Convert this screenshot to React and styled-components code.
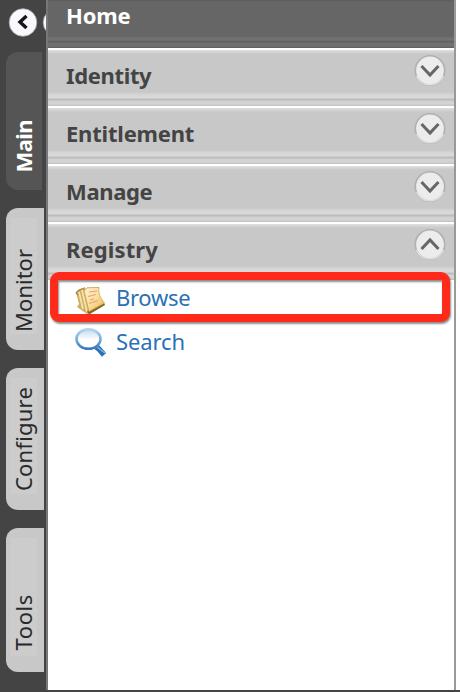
import React from "react";
import styled, { createGlobalStyle, css } from "styled-components";

const Global = createGlobalStyle`
  * { box-sizing: border-box; }
  body { margin: 0; background: #fff; }
`;

const Page = styled.div`
  width: 460px;
  height: 692px;
  display: flex;
  overflow: hidden;
  border-bottom: 2px solid #444;
  background: #fff;
  font-family: "Noto Sans", "Open Sans", sans-serif;
`;

const Rail = styled.aside`
  width: 46px;
  flex: none;
  height: 692px;
  display: flex;
  flex-direction: column;
  background: #444;
`;

const RailControls = styled.div`
  height: 52px;
  flex: none;
  padding: 8px 0 0 8px;
  display: flex;
  gap: 4px;
  overflow: hidden;
`;

const RoundIcon = styled.svg`
  width: 30px;
  height: 30px;
  flex: none;
`;

const Tabs = styled.nav`
  display: flex;
  flex-direction: column;
  gap: 18px;
  padding-left: 6px;
`;

const Tab = styled.div`
  width: ${(p) => (p.$active ? 36 : 38)}px;
  height: ${(p) => p.$height}px;
  flex: none;
  border-radius: 12px 0 0 12px;
  background: ${(p) => (p.$active ? "#555" : "#c8c8c8")};
  padding: 10px 7px 16px 4px;
`;

const TabFace = styled.div`
  width: 27px;
  height: 100%;
  display: flex;
  align-items: flex-end;
  justify-content: center;
  background: ${(p) => (p.$active ? "transparent" : "#ccc")};
`;

const TabLabel = styled.span`
  writing-mode: vertical-rl;
  transform: rotate(180deg);
  line-height: 27px;
  white-space: nowrap;
  font-size: 22px;
  font-weight: ${(p) => (p.$active ? 700 : 400)};
  color: ${(p) => (p.$active ? "#fff" : "#2a2a2a")};
  letter-spacing: ${(p) => p.$spacing || 0}px;
  padding-top: ${(p) => p.$offset}px;
`;

const Panel = styled.main`
  width: 410px;
  flex: none;
  height: 690px;
  border-left: 2px solid #777;
  border-right: 2px solid #999;
  background: #fff;
`;

const barText = css`
  font-size: 22px;
  line-height: 30px;
  font-weight: 700;
`;

const HomeBar = styled.div`
  ${barText}
  height: 48px;
  padding: 0 0 0 18px;
  color: #fff;
  background: linear-gradient(
    #5c5c5c 0, #666 2px, #666 36px, #717171 38px, #737373 40px,
    #666 41px, #5f5f5f 42px, #707070 43px, #737373 46px, #5c5c5c 48px
  );
`;

const SectionBar = styled.div`
  ${barText}
  height: 58px;
  display: flex;
  align-items: flex-start;
  justify-content: space-between;
  padding: 12px 8px 0 18px;
  color: #444;
  background: linear-gradient(
    #fff 0, #fff 2px, #e0e0e0 2px, #d4d4d4 4px, #c8c8c8 6px, #c8c8c8 44px,
    #d7d7d7 47px, #d9d9d9 50px, #bcbcbc 51px, #bcbcbc 52px, #d2d2d2 53px,
    #d4d4d4 56px, #c0c0c0 58px
  );
`;

const Label = styled.span`
  letter-spacing: ${(p) => p.$spacing || 0}px;
`;

const Toggle = styled.svg`
  width: 32px;
  height: 32px;
  margin-top: -5px;
`;

const Entry = styled.a`
  height: 44px;
  display: flex;
  align-items: center;
  gap: 10px;
  padding-left: 27px;
  position: relative;
  font-size: 22px;
  line-height: 30px;
  color: #2a70b6;
`;

const EntryIcon = styled.svg`
  width: 31px;
  height: 31px;
  flex: none;
  margin-top: ${(p) => p.$drop || 3}px;
`;

const Entries = styled.div`
  position: relative;
  margin-top: -5px;
`;

const Highlight = styled.div`
  position: absolute;
  left: 2px;
  top: -3px;
  width: 400px;
  height: 50px;
  border: 8px solid #ff2a1a;
  border-radius: 9px;
  background: #fff;
  box-shadow: 1px 2px 2px rgba(0, 0, 0, 0.45), inset 1px 2px 2px rgba(0, 0, 0, 0.45);
`;

function Chevron({ up }) {
  return (
    <Toggle viewBox="0 0 32 32">
      <circle cx="16" cy="15.5" r="14.7" fill="#ececec" stroke="#b0b0b0" strokeWidth="1.6" />
      <path d="M2.5 21a14.8 14.8 0 0 0 27 0" fill="none" stroke="#ddd" strokeWidth="1.7" />
      <path
        d={up ? "M7.5 20 16 11 24.5 20" : "M7.500 11 16 20 24.500 11"}
        fill="none" stroke="#666" strokeWidth="3"
      />
    </Toggle>
  );
}

function BackButton({ arrow }) {
  return (
    <RoundIcon viewBox="0 0 30 30">
      <circle cx="15" cy="14.5" r="13.8" fill="#f9f8fc" stroke="#aaa" strokeWidth="0.8" />
      {arrow && <path d="M18.5 8 12 14l6.5 6" fill="none" stroke="#161616" strokeWidth="3.4" />}
    </RoundIcon>
  );
}

function BookIcon() {
  return (
    <EntryIcon viewBox="0 0 31 31" $drop={6}>
      <defs>
        <linearGradient id="page" x1="0" y1="0" x2="1" y2="1">
          <stop offset="0" stopColor="#fff1d2" />
          <stop offset="0.5" stopColor="#fbdfa0" />
          <stop offset="1" stopColor="#e9b849" />
        </linearGradient>
      </defs>
      <path d="M1 7 5 4 10 2 16 28 12 29 5 24 2 22 4 19Z" fill="#d0ad60" />
      <path d="M4 7 8 24M7 5 12 27" stroke="#f7e3ad" strokeWidth="1.8" />
      <path d="M12 26 29 18 30 20 14 29.5Z" fill="#80631f" />
      <path d="M9 6 12 2.8 24 2.5C23 8 25 13 29.5 18L14 26.5C12 19 11 13 9 6Z" fill="url(#page)" stroke="#cda650" strokeWidth="0.9" />
      <path d="M1 8 4 5 9 3.5M1 8l2 2" fill="none" stroke="#a98747" strokeWidth="1.3" />
      <path d="M14 7 22 6M13 11.5l8-2M15 15l4-1M14 18.5l9-3" stroke="#e9a26c" strokeWidth="1.2" />
    </EntryIcon>
  );
}

function SearchIcon() {
  return (
    <EntryIcon viewBox="0 0 31 31">
      <defs>
        <linearGradient id="rim" x1="0" y1="0" x2="0" y2="1">
          <stop offset="0" stopColor="#b7d4ec" />
          <stop offset="0.5" stopColor="#78addd" />
          <stop offset="1" stopColor="#3979bd" />
        </linearGradient>
        <linearGradient id="glass" x1="0" y1="0" x2="0" y2="1">
          <stop offset="0" stopColor="#bfdcf3" />
          <stop offset="0.55" stopColor="#fff" />
        </linearGradient>
      </defs>
      <path d="M20 19 24 22 29 28" fill="none" stroke="#2c70b5" strokeWidth="5.5" />
      <path d="m22 20 8 6" stroke="#7fb6e2" strokeWidth="1.5" />
      <ellipse cx="13.5" cy="12" rx="12" ry="9.8" fill="url(#glass)" stroke="url(#rim)" strokeWidth="2.5" />
    </EntryIcon>
  );
}

const tabs = [
  { name: "Main", height: 138, active: true, offset: 2, spacing: -0.6 },
  { name: "Monitor", height: 142, offset: 2, spacing: 0 },
  { name: "Configure", height: 142, offset: 3, spacing: 0.2 },
  { name: "Tools", height: 144, offset: 5, spacing: 0.6 },
];

const sections = [
  { name: "Identity", spacing: -0.35 },
  { name: "Entitlement", spacing: -0.2 },
  { name: "Manage", spacing: -0.35 },
  { name: "Registry", spacing: 0.12, open: true },
];

export default function App() {
  return (
    <>
      <Global />
      <Page>
        <Rail>
          <RailControls>
            <BackButton arrow />
            <BackButton />
          </RailControls>
          <Tabs>
            {tabs.map((t) => (
              <Tab key={t.name} $active={t.active} $height={t.height}>
                <TabFace $active={t.active}>
                  <TabLabel $active={t.active} $offset={t.offset} $spacing={t.spacing}>{t.name}</TabLabel>
                </TabFace>
              </Tab>
            ))}
          </Tabs>
        </Rail>
        <Panel>
          <HomeBar><Label $spacing={-0.2}>Home</Label></HomeBar>
          {sections.map((s) => (
            <SectionBar key={s.name}>
              <Label $spacing={s.spacing}>{s.name}</Label>
              <Chevron up={s.open} />
            </SectionBar>
          ))}
          <Entries>
            <Highlight />
            <Entry><BookIcon /><Label $spacing={-0.3}>Browse</Label></Entry>
            <Entry><SearchIcon /><Label $spacing={-0.1}>Search</Label></Entry>
          </Entries>
        </Panel>
      </Page>
    </>
  );
}
